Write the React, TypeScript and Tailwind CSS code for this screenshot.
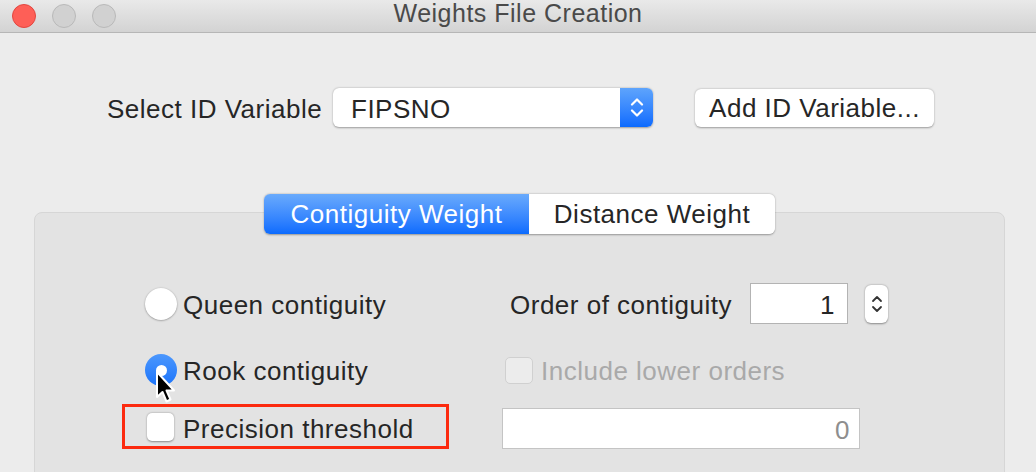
import React from 'react';

function Light({ color }: { color: 'red' | 'grey' }) {
  const cls =
    color === 'red'
      ? 'bg-[#fe5f57] border-[#e2463f]'
      : 'bg-[#d1d1d1] border-[#b9b9b9]';
  return <div className={`w-[24px] h-[24px] rounded-full border ${cls}`} />;
}

function Cursor() {
  return (
    <svg width="26" height="36" viewBox="0 0 26 36" className="absolute left-[154px] top-[370px]">
      <path d="M3 2 L3 27 L8.5 22 L12.5 31.5 L16.5 29.5 L12.5 20.5 L20 20.5 Z" fill="#000" stroke="#fff" strokeWidth="2" strokeLinejoin="round" />
    </svg>
  );
}

export default function App() {
  const font = { fontFamily: '"Liberation Sans", Arial, sans-serif' };
  return (
    <div className="relative w-[1036px] h-[472px] overflow-hidden bg-[#ececec] text-[#262626] tracking-[0.5px]" style={font}>
      {/* title bar */}
      <div className="relative flex items-center h-[33px] px-[12px] gap-[16px] bg-gradient-to-b from-[#e9e9e9] to-[#d3d3d3] border-b border-[#b6b6b6]">
        <Light color="red" />
        <Light color="grey" />
        <Light color="grey" />
        <div className="absolute left-0 right-0 top-0 h-[27px] flex items-center justify-center text-[25px] leading-none text-[#4a4a4a]">
          Weights File Creation
        </div>
      </div>

      {/* id variable row */}
      <div className="flex items-center mt-[54px] pl-[107px] h-[40px]">
        <span className="text-[26px] w-[226px] pt-[5px]">Select ID Variable</span>
        <div className="flex w-[320px] h-[39px] rounded-[6px] bg-white shadow-[0_0.5px_2px_rgba(0,0,0,0.35)] overflow-hidden">
          <div className="flex-1 flex items-center pl-[18px] pt-[4px] text-[26px]">FIPSNO</div>
          <div className="w-[33px] flex flex-col items-center justify-center gap-[3px] bg-gradient-to-b from-[#5ea4fc] to-[#0a6afe]">
            <svg width="14" height="9" viewBox="0 0 14 9"><path d="M2 7.5 L7 2.5 L12 7.5" fill="none" stroke="#fff" strokeWidth="2.2" strokeLinecap="round" strokeLinejoin="round" /></svg>
            <svg width="14" height="9" viewBox="0 0 14 9"><path d="M2 1.5 L7 6.5 L12 1.5" fill="none" stroke="#fff" strokeWidth="2.2" strokeLinecap="round" strokeLinejoin="round" /></svg>
          </div>
        </div>
        <div className="ml-[42px] mt-[1px] pt-[2px] flex items-center justify-center w-[239px] h-[38px] rounded-[6px] bg-white shadow-[0_0.5px_2px_rgba(0,0,0,0.35)] text-[26px]">
          Add ID Variable...
        </div>
      </div>

      {/* panel */}
      <div className="ml-[34px] mt-[85px] w-[971px] h-[300px] rounded-[8px] bg-[#e3e3e3] border border-[#d6d6d6]">
        <div className="flex justify-center -mt-[19px]">
          <div className="flex h-[40px] rounded-[6px] overflow-hidden shadow-[0_0.5px_2px_rgba(0,0,0,0.35)] text-[26px]">
            <div className="w-[265px] flex items-center justify-center text-white bg-gradient-to-b from-[#69aafc] to-[#0a6bfe]">Contiguity Weight</div>
            <div className="w-[246px] flex items-center justify-center bg-white">Distance Weight</div>
          </div>
        </div>

        {/* row 1 */}
        <div className="flex items-center h-[41px] mt-[49px] pl-[110px]">
          <div className="w-[357px] flex items-center">
            <div className="w-[32px] h-[32px] rounded-full bg-white shadow-[0_0.5px_2px_rgba(0,0,0,0.4)]" />
            <span className="ml-[6px] pt-[3px] text-[26px]">Queen contiguity</span>
          </div>
          <span className="ml-[8px] pt-[3px] w-[240px] text-[26px]">Order of contiguity</span>
          <div className="w-[98px] h-[41px] bg-white border border-[#b3b3b3] flex items-center justify-end pr-[12px] pt-[3px] text-[26px]">1</div>
          <div className="ml-[17px] w-[23px] h-[38px] rounded-[6px] bg-white shadow-[0_0.5px_2px_rgba(0,0,0,0.4)] flex flex-col items-center justify-center gap-[2px]">
            <svg width="12" height="8" viewBox="0 0 12 8"><path d="M2 6 L6 2 L10 6" fill="none" stroke="#333" strokeWidth="1.8" strokeLinecap="round" strokeLinejoin="round" /></svg>
            <svg width="12" height="8" viewBox="0 0 12 8"><path d="M2 2 L6 6 L10 2" fill="none" stroke="#333" strokeWidth="1.8" strokeLinecap="round" strokeLinejoin="round" /></svg>
          </div>
        </div>

        {/* row 2 */}
        <div className="flex items-center h-[32px] mt-[30px] pl-[110px]">
          <div className="w-[357px] flex items-center">
            <div className="w-[32px] h-[32px] rounded-full bg-gradient-to-b from-[#4b97fd] to-[#1a74fb] flex items-center justify-center">
              <div className="w-[11px] h-[11px] rounded-full bg-white" />
            </div>
            <span className="ml-[6px] pt-[2px] text-[26px]">Rook contiguity</span>
          </div>
          <div className="ml-[3px] w-[28px] h-[27px] rounded-[5px] bg-[#ececec] border border-[#d0d0d0]" />
          <span className="ml-[8px] pt-[2px] text-[26px] text-[#a9a9a9]">Include lower orders</span>
        </div>

        {/* row 3 */}
        <div className="flex items-start h-[45px] mt-[18px] pl-[87px]">
          <div className="w-[327px] h-[45px] border-[3px] border-[#fc2a0f] flex items-center pl-[22px]">
            <div className="w-[27px] h-[28px] rounded-[5px] bg-white shadow-[0_0.5px_2px_rgba(0,0,0,0.4)]" />
            <span className="ml-[9px] pt-[5px] text-[26px]">Precision threshold</span>
          </div>
          <div className="ml-[53px] mt-[4px] w-[358px] h-[41px] bg-white border border-[#c4c4c4] flex items-center justify-end pr-[9px] pt-[3px] text-[26px] text-[#8e8e8e]">0</div>
        </div>
      </div>

      <Cursor />
    </div>
  );
}
